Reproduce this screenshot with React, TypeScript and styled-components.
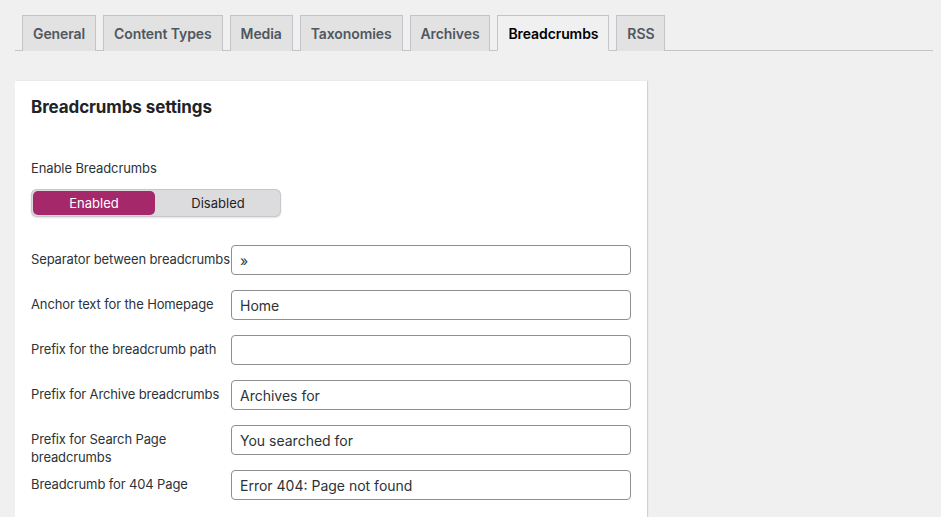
import React from "react";
import styled, { createGlobalStyle } from "styled-components";

const Global = createGlobalStyle`
  html, body { margin: 0; padding: 0; background: #f0f0f1; }
  body {
    font-family: Inter, "Liberation Sans", Arial, sans-serif;
    color: #1d2327;
    -webkit-font-smoothing: antialiased;
  }
  * { box-sizing: border-box; }
`;

const Page = styled.div`
  padding: 15px 8px 0 15px;
  min-height: 517px;
`;

const TabBar = styled.nav`
  display: flex;
  gap: 7px;
  padding-left: 7px;
  border-bottom: 1px solid #c3c4c7;
  height: 36px;
`;

const Tab = styled.a<{ $active?: boolean }>`
  display: flex;
  align-items: center;
  height: 36px;
  padding: 0 10px;
  border: 1px solid #c3c4c7;
  border-bottom: ${(p) => (p.$active ? "1px solid #f0f0f1" : "none")};
  background: ${(p) => (p.$active ? "#f0f0f1" : "#e2e2e3")};
  color: ${(p) => (p.$active ? "#000" : "#50575e")};
  font-size: 14px;
  font-weight: 600;
  text-decoration: none;
  letter-spacing: -0.1px;
`;

const Card = styled.section`
  margin-top: 30px;
  width: 632px;
  background: #fff;
  padding: 14px 16px 40px 16px;
  box-shadow: 1px 0 1px rgba(0, 0, 0, 0.12);
`;

const Title = styled.h2`
  margin: 0;
  font-size: 17px;
  font-weight: 700;
  line-height: 24px;
  color: #1d2327;
  letter-spacing: -0.1px;
`;

const FieldLabel = styled.div`
  margin-top: 40px;
  font-size: 13px;
  line-height: 18px;
  color: #2c3338;
  letter-spacing: -0.1px;
`;

const Toggle = styled.div`
  margin-top: 12px;
  width: 250px;
  height: 28px;
  display: grid;
  grid-template-columns: 1fr 1fr;
  gap: 2px;
  padding: 2px;
  border-radius: 6px;
  background: #dcdcde;
  box-shadow: inset 0 0 0 1px #c8c8ca, 0 1px 2px rgba(0, 0, 0, 0.12);
`;

const ToggleOption = styled.button<{ $on?: boolean }>`
  border: none;
  border-radius: 5px;
  background: ${(p) => (p.$on ? "#a4286a" : "transparent")};
  color: ${(p) => (p.$on ? "#fff" : "#1d2327")};
  font-family: inherit;
  font-size: 13px;
  padding: 0;
  cursor: pointer;
`;

const Rows = styled.div`
  margin-top: 28px;
  display: flex;
  flex-direction: column;
  gap: 15px;
`;

const Row = styled.div`
  display: grid;
  grid-template-columns: 200px 400px;
  height: 30px;
`;

const RowLabel = styled.label`
  padding-top: 5px;
  margin-right: -4px;
  font-size: 13px;
  line-height: 18px;
  color: #2c3338;
  letter-spacing: -0.13px;
`;

const Input = styled.input`
  width: 400px;
  height: 30px;
  border: 1px solid #8c8f94;
  border-radius: 4px;
  padding: 0 8px;
  font-family: inherit;
  font-size: 14px;
  color: #2c3338;
  background: #fff;
  outline: none;
`;

const tabs = ["General", "Content Types", "Media", "Taxonomies", "Archives", "Breadcrumbs", "RSS"];

const fields = [
  { label: "Separator between breadcrumbs", value: "»" },
  { label: "Anchor text for the Homepage", value: "Home" },
  { label: "Prefix for the breadcrumb path", value: "" },
  { label: "Prefix for Archive breadcrumbs", value: "Archives for" },
  { label: "Prefix for Search Page breadcrumbs", value: "You searched for" },
  { label: "Breadcrumb for 404 Page", value: "Error 404: Page not found" },
];

export default function App() {
  return (
    <>
      <Global />
      <Page>
        <TabBar>
          {tabs.map((t) => (
            <Tab key={t} $active={t === "Breadcrumbs"} href="#">
              {t}
            </Tab>
          ))}
        </TabBar>
        <Card>
          <Title>Breadcrumbs settings</Title>
          <FieldLabel>Enable Breadcrumbs</FieldLabel>
          <Toggle>
            <ToggleOption $on>Enabled</ToggleOption>
            <ToggleOption>Disabled</ToggleOption>
          </Toggle>
          <Rows>
            {fields.map((f) => (
              <Row key={f.label}>
                <RowLabel>{f.label}</RowLabel>
                <Input defaultValue={f.value} />
              </Row>
            ))}
          </Rows>
        </Card>
      </Page>
    </>
  );
}
